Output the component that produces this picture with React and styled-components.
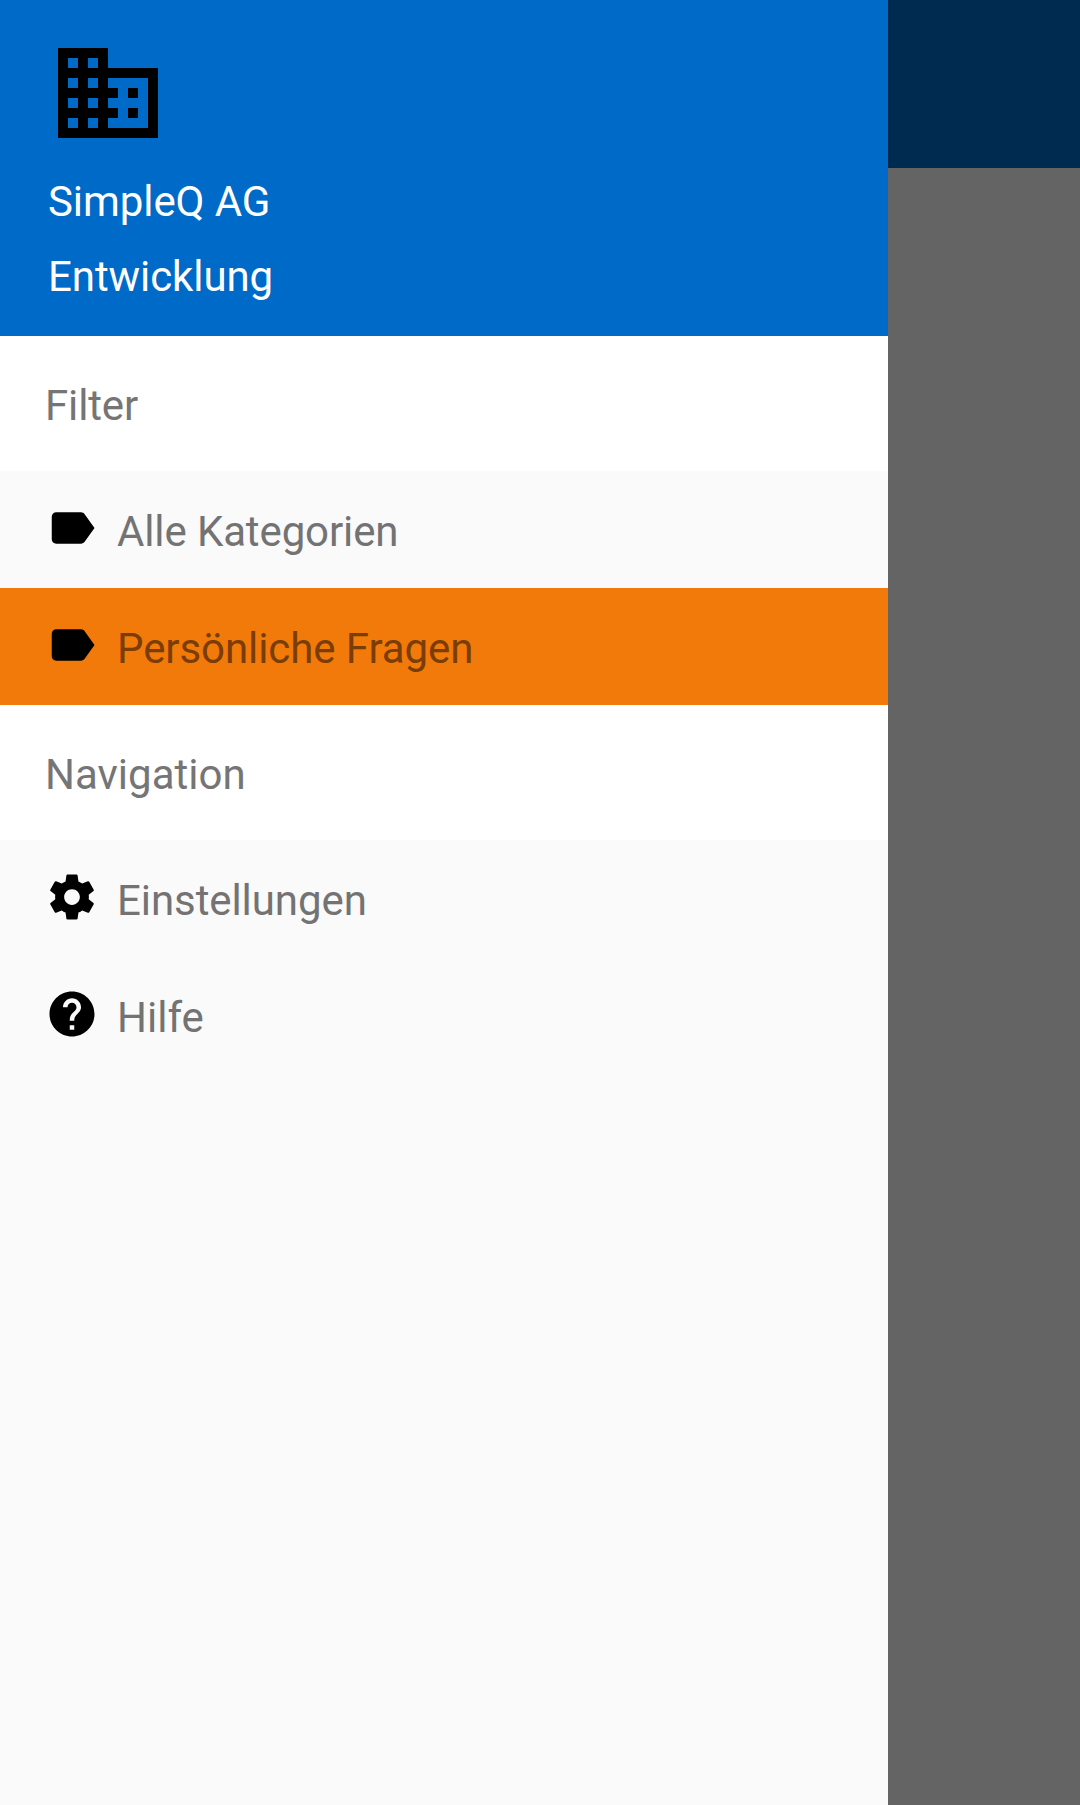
import React from "react";
import styled, { createGlobalStyle } from "styled-components";
import { MdBusiness, MdLabel, MdHelp } from "react-icons/md";

const Global = createGlobalStyle`
  body { margin: 0; background: #646464; font-family: Roboto, "Liberation Sans", sans-serif; }
`;
const Screen = styled.div`
  display: flex; width: 1080px; height: 1805px; overflow: hidden; background: #646464;
`;
const Drawer = styled.nav`
  width: 888px; height: 100%; flex: none; background: #fafafa; color: #757575;
  font-size: 42px; line-height: 49px;
`;
const Header = styled.header`
  box-sizing: border-box; height: 336px; padding: 33px 48px 0; background: #006ac8; color: #fff;
`;
const Logo = styled(MdBusiness)`
  display: block; width: 120px; height: 120px; color: #000;
`;
const HeaderLine = styled.div`
  height: 75px; padding-top: 24px; box-sizing: border-box; letter-spacing: -0.08px;
`;
const Section = styled.h2`
  margin: 0; height: 135px; padding: 3px 45px 0; box-sizing: border-box;
  display: flex; align-items: center; background: #fff; font: inherit;
  letter-spacing: ${(p) => p.$tracking || 0}px;
`;
const Item = styled.div`
  box-sizing: border-box; height: 117px; padding: 30px 0 0 45px;
  display: flex; align-items: flex-start; gap: 18px;
  background: ${(p) => (p.$active ? "#f17a0a" : "transparent")};
  color: ${(p) => (p.$active ? "#793d05" : "#737373")};
  svg { width: 54px; height: 54px; fill: #000; color: #000; flex: none; }
`;
const Label = styled.span`
  padding-top: 6px; letter-spacing: ${(p) => p.$tracking || 0}px;
`;
const Backdrop = styled.div`flex: 1;`;
const AppBar = styled.div`height: 168px; background: #002b50;`;

const Gear = () => (
  <svg viewBox="0 0 24 24">
    <path d="M19.43 12.98c.04-.32.07-.64.07-.98s-.03-.66-.07-.98l2.11-1.65c.19-.15.24-.42.12-.64l-2-3.46c-.12-.22-.39-.3-.61-.22l-2.49 1c-.52-.4-1.08-.73-1.69-.98l-.38-2.65C14.46 2.18 14.25 2 14 2h-4c-.25 0-.46.18-.49.42l-.38 2.65c-.61.25-1.17.59-1.69.98l-2.49-1c-.23-.09-.49 0-.61.22l-2 3.46c-.13.22-.07.49.12.64l2.11 1.65c-.04.32-.07.65-.07.98s.03.66.07.98l-2.11 1.65c-.19.15-.24.42-.12.64l2 3.46c.12.22.39.3.61.22l2.49-1c.52.4 1.08.73 1.69.98l.38 2.65c.03.24.24.42.49.42h4c.25 0 .46-.18.49-.42l.38-2.65c.61-.25 1.17-.59 1.69-.98l2.49 1c.23.09.49 0 .61-.22l2-3.46c.12-.22.07-.49-.12-.64l-2.11-1.65zM12 15.5c-1.93 0-3.5-1.57-3.5-3.5s1.57-3.5 3.5-3.5 3.5 1.57 3.5 3.5-1.57 3.5-3.5 3.5z" />
  </svg>
);

export default function App() {
  return (
    <Screen>
      <Global />
      <Drawer>
        <Header>
          <Logo />
          <HeaderLine>SimpleQ AG</HeaderLine>
          <HeaderLine>Entwicklung</HeaderLine>
        </Header>
        <Section $tracking={-0.15}>Filter</Section>
        <Item><MdLabel /><Label $tracking={-0.12}>Alle Kategorien</Label></Item>
        <Item $active><MdLabel /><Label $tracking={-0.08}>Persönliche Fragen</Label></Item>
        <Section>Navigation</Section>
        <Item><Gear /><Label $tracking={-0.08}>Einstellungen</Label></Item>
        <Item><MdHelp /><Label>Hilfe</Label></Item>
      </Drawer>
      <Backdrop><AppBar /></Backdrop>
    </Screen>
  );
}
